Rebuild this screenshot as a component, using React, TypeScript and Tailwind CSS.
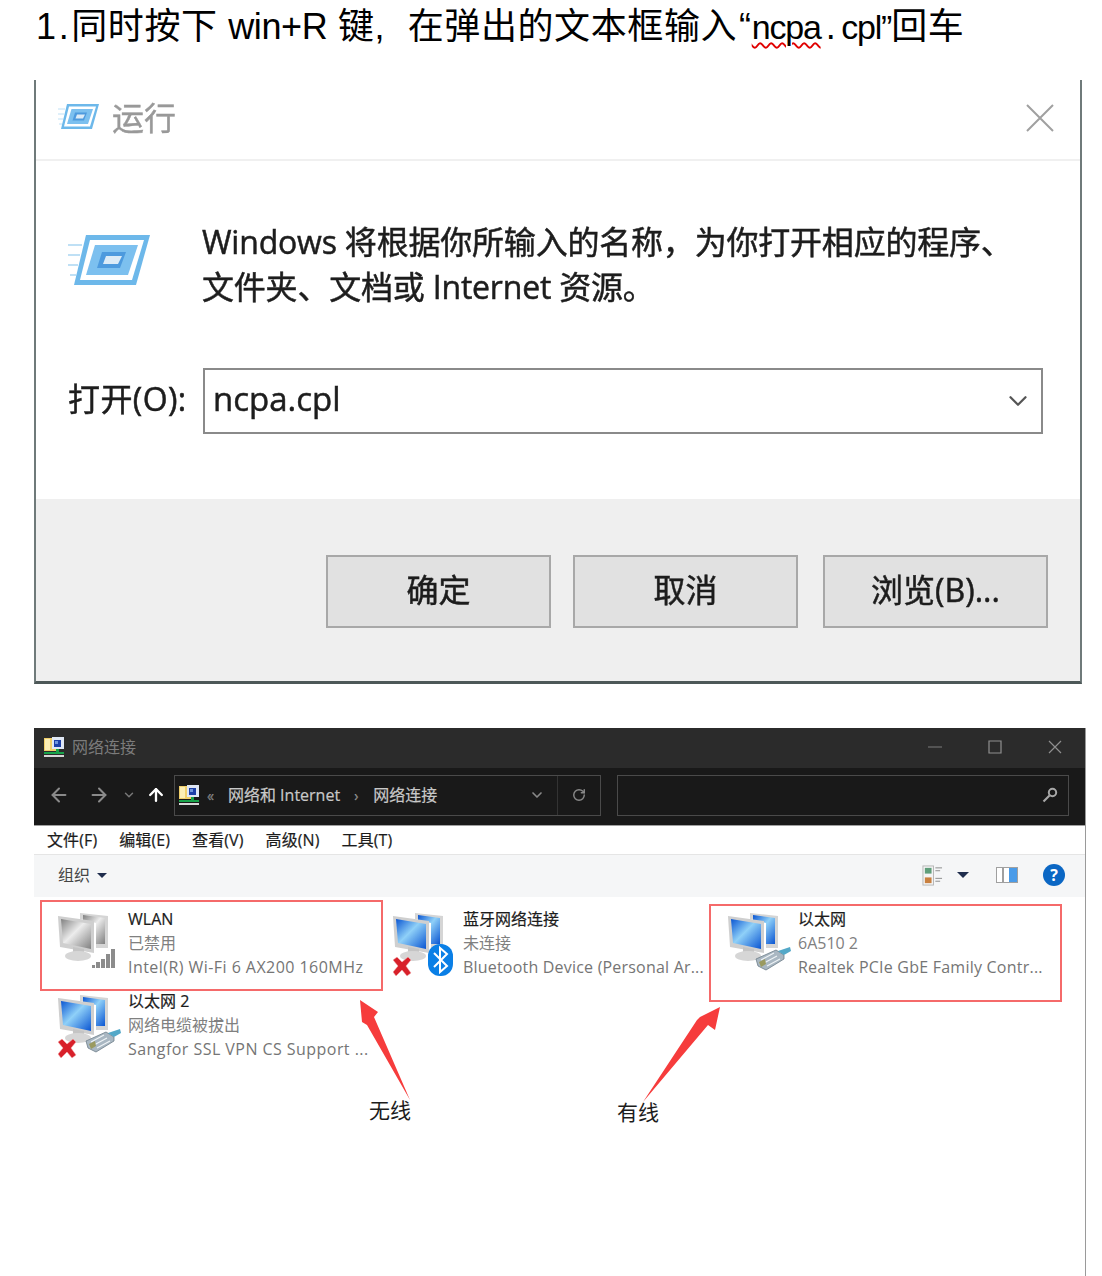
import React from "react";
import { ArrowLeft, ArrowRight, ArrowUp, ChevronDown, RotateCw } from "lucide-react";

const cjk = "font-['Open_Sans','Noto_Sans_CJK_SC',sans-serif]";
const heavy = "[-webkit-text-stroke:0.5px_#1d1d1d]";

// small run-dialog icon, also used at the big size
const RunIcon = ({ className }: { className: string }) => (
    <svg viewBox="0 0 84 58" className={className}>
        <g stroke="#bfe0f5" strokeWidth="2">
            <path d="M0 12H14M0 22H12M0 32H10M2 42H8" />
        </g>
        <path d="M18 2H82L68 52H6Z" fill="#6db8ea" />
        <path d="M22 7H76L64 47H12Z" fill="#fff" />
        <path d="M27 12H70L60 42H18Z" fill="#7cc0ef" />
        <path d="M34 19H58L52 35H29Z" fill="#4d9ade" />
        <path d="M38 23H54L50 31H35Z" fill="#dcebf7" />
    </svg>
);

// yellow folder with monitor, network connections icon
const FolderNetIcon = () => (
    <svg viewBox="0 0 22 22" className="w-[22px] h-[22px] blur-[0.3px]">
        <path d="M1 2H13V15H1Z" fill="#f0cf6a" />
        <path d="M2 3H7V14H2Z" fill="#fbeeb5" />
        <path d="M9 1H21V13H9Z" fill="#dfe7f5" />
        <path d="M11 4H18V11H11Z" fill="#1c3fa8" />
        <path d="M12 5H15V8H12Z" fill="#6f95dd" />
        <path d="M13 13H16V17H13Z" fill="#18a34a" />
        <path d="M1 16H21V18H1Z" fill="#18a34a" />
        <path d="M1 19H21V21H1Z" fill="#d8d8d8" />
    </svg>
);

const Monitors = ({ tone }: { tone: "blue" | "grey" }) => {
    const hi = tone === "blue" ? "#8fd0f8" : "#ececec";
    const lo = tone === "blue" ? "#0a55d2" : "#808080";
    const id = `screen-${tone}`;
    return (
        <>
            <defs>
                <linearGradient id={id} x1="0" y1="0" x2="1" y2="1">
                    <stop offset="0" stopColor={lo} />
                    <stop offset="0.45" stopColor={hi} />
                    <stop offset="1" stopColor={lo} />
                </linearGradient>
            </defs>
            <path d="M22 6L50 9V41L38 41V14L22 12Z" fill="#d5d5d5" />
            <path d="M25 8L47 11V37L38 37V16L25 13Z" fill={`url(#${id})`} />
            <path d="M0 9L36 14V46L2 40Z" fill="#cfcfcf" />
            <path d="M3 12L33 17V42L5 36Z" fill={`url(#${id})`} />
            <path d="M15 40L26 42V47L15 45Z" fill="#c4c4c4" />
            <ellipse cx="20" cy="49" rx="13" ry="5" fill="#d6d6d6" />
        </>
    );
};

const RedCross = () => (
    <path d="M0 53L4 50L9 55L15 50L18 53L13 59L18 66L14 69L9 63L3 69L0 65L5 59Z" fill="#d8202a" stroke="#f3b0b0" strokeWidth="0.5" />
);

const Plug = () => (
    <g>
        <path d="M28 52L48 43L56 48L56 52L38 63L30 59Z" fill="#a9b7c2" stroke="#6d7d89" strokeWidth="0.8" />
        <path d="M33 53L46 46M36 56L49 49M39 59L52 52" stroke="#eef3f6" strokeWidth="1.2" />
        <path d="M31 55L37 52L38 57L33 60Z" fill="#9a9a60" />
        <path d="M50 44L62 40L63 44L56 48Z" fill="#53a8c8" />
    </g>
);

const Signal = () => (
    <g fill="#8c8c8c">
        <rect x="34" y="58" width="3" height="3" />
        <rect x="38" y="55" width="4" height="6" />
        <rect x="43" y="52" width="4" height="9" />
        <rect x="48" y="47" width="4" height="14" />
        <rect x="53" y="42" width="4" height="19" />
    </g>
);

const Bluetooth = () => (
    <g>
        <rect x="35" y="37" width="25" height="32" rx="12" fill="#0a7fe6" />
        <path d="M41 46L54 59L47 65V41L54 47L41 60" fill="none" stroke="#fff" strokeWidth="2" />
    </g>
);

type Item = { name: string; sub: string; dev: string; spacing: string; tone: "blue" | "grey"; badge: "signal" | "bt" | "plug"; cross: boolean };

const items: Item[] = [
    { name: "WLAN", sub: "已禁用", dev: "Intel(R) Wi-Fi 6 AX200 160MHz", spacing: "tracking-[0.45px]", tone: "grey", badge: "signal", cross: false },
    { name: "蓝牙网络连接", sub: "未连接", dev: "Bluetooth Device (Personal Ar...", spacing: "tracking-[0.2px]", tone: "blue", badge: "bt", cross: true },
    { name: "以太网", sub: "6A510 2", dev: "Realtek PCIe GbE Family Contr...", spacing: "tracking-[0.23px]", tone: "blue", badge: "plug", cross: false },
    { name: "以太网 2", sub: "网络电缆被拔出", dev: "Sangfor SSL VPN CS Support ...", spacing: "tracking-[0.45px]", tone: "blue", badge: "plug", cross: true },
];

const NetItem = ({ item }: { item: Item }) => (
    <div className="flex h-[82px]">
        <svg viewBox="0 0 70 72" className="w-[70px] h-[72px] shrink-0 blur-[0.5px]">
            <Monitors tone={item.tone} />
            {item.cross && <RedCross />}
            {item.badge === "signal" && <Signal />}
            {item.badge === "bt" && <Bluetooth />}
            {item.badge === "plug" && <Plug />}
        </svg>
        <div className="text-[16px] leading-[24px] whitespace-nowrap">
            <div className="text-[#1c1c1c] [-webkit-text-stroke:0.2px_#1c1c1c]">{item.name}</div>
            <div className="text-[#808080]">{item.sub}</div>
            <div className={`text-[#757575] ${item.spacing}`}>{item.dev}</div>
        </div>
    </div>
);

const DialogButton = ({ label, className }: { label: string; className: string }) => (
    <button className={`w-[225px] h-[73px] pb-[4px] bg-[#e1e1e1] border-2 border-[#a8a8a8] text-[32px] text-[#1c1c1c] ${heavy} ${className}`}>{label}</button>
);

export default function App() {
    return (
        <div className={`relative w-[1102px] h-[1276px] bg-white overflow-hidden ${cjk}`}>
            {/* instruction line */}
            <div className="h-[80px] pl-[36px] pt-[3px] text-[36px] leading-[48px] tracking-[0.6px] text-black whitespace-nowrap font-['Liberation_Sans','Noto_Sans_CJK_SC',sans-serif]">
                1<span className="mx-[2px]">.</span>同时按下 <span className="tracking-[-0.4px]">win+R</span> 键, <span className="ml-[12px]">在弹出的文本框输入</span><span className="ml-[2px]">“</span><span className="text-[34px] tracking-[-1.2px] underline decoration-wavy decoration-[#e00000] decoration-[1.5px] underline-offset-[3px]">ncpa</span><span className="mx-[5px]">.</span><span className="text-[34px] tracking-[-1.2px]">cpl”</span>回车
            </div>

            {/* run dialog */}
            <div className="ml-[34px] w-[1048px] h-[604px] flex flex-col border-x-2 border-b-[3px] border-x-[#6f7a7a] border-b-[#4d5858]">
                <div className="h-[81px] shrink-0 flex items-center pl-[22px] pr-[26px] pb-[4px] border-b-2 border-[#f0f0f0] blur-[0.6px]">
                    <RunIcon className="w-[42px] h-[29px]" />
                    <span className="ml-[12px] text-[32px] text-[#999] [-webkit-text-stroke:0.4px_#999]">运行</span>
                    <svg viewBox="0 0 28 28" className="ml-auto w-[28px] h-[28px]">
                        <path d="M1 1L27 27M27 1L1 27" stroke="#a0a0a0" strokeWidth="2" fill="none" />
                    </svg>
                </div>
                <div className="flex-1 flex flex-col pt-[58px] blur-[0.5px]">
                    <div className="flex">
                        <RunIcon className="ml-[32px] mt-[14px] w-[84px] h-[58px] blur-[0.6px]" />
                        <div className={`ml-[50px] text-[32px] leading-[45px] text-[#1d1d1d] tracking-[-0.2px] whitespace-nowrap ${heavy}`}>
                            <div>Windows 将根据你所输入的名称，为你打开相应的程序、</div>
                            <div>文件夹、文档或 Internet 资源。</div>
                        </div>
                    </div>
                    <div className="flex items-center mt-[59px]">
                        <div className={`ml-[32px] w-[135px] pb-[4px] text-[32px] text-[#1d1d1d] tracking-[0.4px] whitespace-nowrap ${heavy}`}>打开(O):</div>
                        <div className={`w-[840px] h-[66px] border-2 border-[#8a8a8a] flex items-center pl-[8px] pr-[8px] text-[33px] text-[#1d1d1d] ${heavy}`}>
                            <span className="pb-[4px]">ncpa.cpl</span>
                            <ChevronDown className="ml-auto w-[30px] h-[30px] text-[#555]" strokeWidth={1.8} />
                        </div>
                    </div>
                </div>
                <div className="h-[182px] shrink-0 bg-[#efefef] flex pt-[56px] pl-[290px] blur-[0.5px]">
                    <DialogButton label="确定" className="" />
                    <DialogButton label="取消" className="ml-[22px]" />
                    <DialogButton label="浏览(B)..." className="ml-[25px]" />
                </div>
            </div>

            {/* network connections window */}
            <div className="ml-[34px] mt-[44px] w-[1052px] h-[548px] border-r border-[#9a9a9a] flex flex-col">
                <div className="h-[40px] shrink-0 bg-[#2b2b2b] flex items-center pl-[9px] pb-[2px] text-[16px] text-[#7c7c7c]">
                    <FolderNetIcon />
                    <span className="ml-[7px]">网络连接</span>
                    <div className="ml-auto flex items-center">
                        <div className="w-[60px] flex justify-center">
                            <svg viewBox="0 0 14 14" className="w-[14px] h-[14px]"><path d="M0 7H14" stroke="#6f6f6f" strokeWidth="1.2" /></svg>
                        </div>
                        <div className="w-[60px] flex justify-center">
                            <svg viewBox="0 0 14 14" className="w-[14px] h-[14px]"><path d="M1 1H13V13H1Z" stroke="#8f8f8f" strokeWidth="1.2" fill="none" /></svg>
                        </div>
                        <div className="w-[60px] flex justify-center">
                            <svg viewBox="0 0 14 14" className="w-[14px] h-[14px]"><path d="M1 1L13 13M13 1L1 13" stroke="#8f8f8f" strokeWidth="1.2" fill="none" /></svg>
                        </div>
                    </div>
                </div>
                <div className="h-[58px] shrink-0 bg-[#191919] border-b border-[#a0a0a0] flex items-center pl-[14px] pr-[16px] pb-[3px]">
                    <ArrowLeft className="w-[22px] h-[22px] text-[#8a8a8a]" strokeWidth={2.2} />
                    <ArrowRight className="ml-[18px] w-[22px] h-[22px] text-[#8a8a8a]" strokeWidth={2.2} />
                    <ChevronDown className="ml-[12px] w-[14px] h-[14px] text-[#777]" strokeWidth={2.5} />
                    <ArrowUp className="ml-[10px] w-[20px] h-[20px] text-white" strokeWidth={2.8} />
                    <div className="ml-[8px] w-[427px] h-[41px] border border-[#4a4a4a] flex items-center pl-[3px] text-[16px] text-[#c8c8c8] [-webkit-text-stroke:0.2px_#c8c8c8]">
                        <FolderNetIcon />
                        <span className="ml-[7px] text-[#666] text-[14px]">«</span>
                        <span className="ml-[14px]">网络和 Internet</span>
                        <span className="ml-[14px] text-[#777] text-[14px]">›</span>
                        <span className="ml-[15px]">网络连接</span>
                        <ChevronDown className="ml-auto w-[16px] h-[16px] text-[#888]" strokeWidth={2.5} />
                        <div className="ml-[12px] h-full w-[43px] border-l border-[#333] flex items-center justify-center">
                            <RotateCw className="w-[14px] h-[14px] text-[#888]" strokeWidth={2.5} />
                        </div>
                    </div>
                    <div className="ml-[16px] w-[452px] h-[41px] border border-[#4a4a4a] flex items-center justify-end pr-[10px]">
                        <svg viewBox="0 0 16 16" className="w-[16px] h-[16px] blur-[0.3px]">
                            <circle cx="10.5" cy="5.5" r="3.7" fill="none" stroke="#a8a8a8" strokeWidth="2" />
                            <path d="M7.5 8.5L1.5 14.5" stroke="#a8a8a8" strokeWidth="2.2" />
                        </svg>
                    </div>
                </div>
                <div className="h-[29px] shrink-0 bg-white border-b border-[#e5e5e5] flex items-center pl-[13px] gap-[22px] text-[16px] text-[#1c1c1c] tracking-[0.1px] [-webkit-text-stroke:0.2px_#1c1c1c]">
                    <span>文件(F)</span>
                    <span>编辑(E)</span>
                    <span>查看(V)</span>
                    <span>高级(N)</span>
                    <span>工具(T)</span>
                </div>
                <div className="h-[42px] shrink-0 bg-[#f5f6f7] flex items-center pl-[24px] pr-[20px] pb-[2px] text-[16px] text-[#444]">
                    <span>组织</span>
                    <span className="ml-[7px] border-x-[5px] border-t-[5px] border-x-transparent border-t-[#1f2d4d]" />
                    <svg viewBox="0 0 22 22" className="ml-auto w-[21px] h-[21px] blur-[0.3px]">
                        <rect x="1" y="1" width="11" height="20" fill="#f4f4f4" stroke="#b5b5b5" />
                        <rect x="3" y="3" width="7" height="6" fill="#5f9e7a" />
                        <rect x="3" y="13" width="7" height="6" fill="#c9803f" />
                        <path d="M14 3H21M14 6H19M14 14H21M14 17H19" stroke="#8a8a8a" />
                    </svg>
                    <span className="ml-[14px] border-x-[6px] border-t-[6px] border-x-transparent border-t-[#1f2d4d]" />
                    <svg viewBox="0 0 22 16" className="ml-[27px] w-[22px] h-[16px] blur-[0.3px]">
                        <rect x="0.5" y="0.5" width="21" height="15" fill="#fff" stroke="#a0a0a0" />
                        <rect x="6" y="1" width="2" height="14" fill="#a0a0a0" />
                        <rect x="13" y="1" width="8" height="14" fill="#4a9be8" />
                    </svg>
                    <div className="ml-[25px] w-[22px] h-[22px] rounded-full bg-[#0b67c4] flex items-center justify-center text-white text-[16px] font-bold">?</div>
                </div>
                <div className="flex-1 bg-white pt-[10px] pl-[24px]">
                    <div className="grid grid-cols-[335px_335px_335px]">
                        {items.map((item) => (
                            <NetItem key={item.name} item={item} />
                        ))}
                    </div>
                </div>
            </div>

            {/* red annotations over the screenshot */}
            <div className="absolute left-[40px] top-[900px] w-[343px] h-[91px] border-2 border-[#f56a6a]" />
            <div className="absolute left-[709px] top-[904px] w-[353px] h-[98px] border-2 border-[#f56a6a]" />
            <svg viewBox="0 0 1102 1276" className="absolute left-0 top-0 w-[1102px] h-[1276px] pointer-events-none">
                <path d="M360 1000L378 1012L374 1017L410 1100L367 1025L362 1022Z" fill="#f63c3c" />
                <path d="M720 1007L715 1030L708 1025L643 1102L697 1020L700 1017Z" fill="#f63c3c" />
            </svg>
            <div className="absolute left-[369px] top-[1096px] text-[21px] leading-[28px] text-[#1c1c1c]">无线</div>
            <div className="absolute left-[617px] top-[1098px] text-[21px] leading-[28px] text-[#1c1c1c]">有线</div>
        </div>
    );
}
